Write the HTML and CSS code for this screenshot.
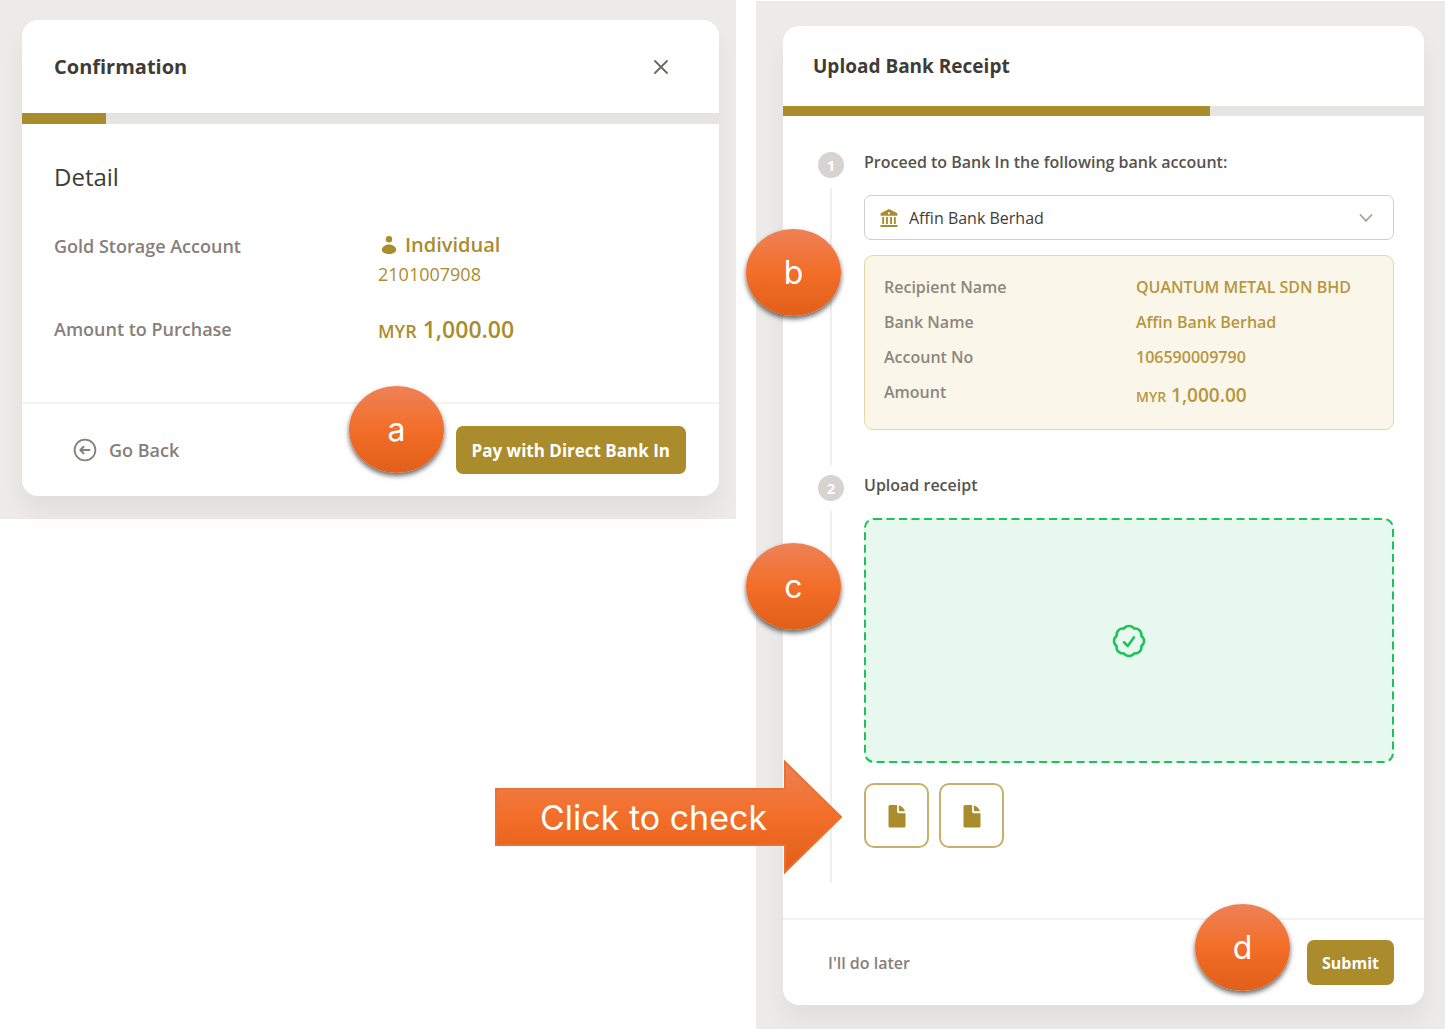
FILE: index.html
```html
<!DOCTYPE html>
<html lang="en">
<head>
<meta charset="utf-8">
<meta name="viewport" content="width=device-width, initial-scale=1">
<title>Direct Bank In</title>
<link rel="stylesheet" href="styles.css">
</head>
<body>
<main class="guide">
  <section class="panel panel-confirm">
    <article class="card">
      <header class="card-header">
        <h1 class="card-title">Confirmation</h1>
        <button class="close" type="button" aria-label="Close">
          <svg width="16" height="16" viewBox="0 0 16 16" fill="none" stroke="currentColor" stroke-width="1.8" stroke-linecap="round"><path d="M2 2l12 12M14 2L2 14"/></svg>
        </button>
      </header>
      <div class="progress"><div class="progress-bar" style="width:12%"></div></div>
      <div class="confirm-body">
        <h2 class="section-title">Detail</h2>
        <dl class="details">
          <dt>Gold Storage Account</dt>
          <dd>
            <span class="holder">
              <svg width="16" height="18" viewBox="0 0 16 18" fill="currentColor"><circle cx="8" cy="3.2" r="3.2"/><path d="M8 8.6c4 0 7.2 2.6 7.2 5.2S12 18 8 18 .8 16.4.8 13.8 4 8.600 8 8.600z"/></svg>
              Individual
            </span>
            <span class="account-no">2101007908</span>
          </dd>
          <dt>Amount to Purchase</dt>
          <dd class="amount"><small>MYR</small> 1,000.00</dd>
        </dl>
      </div>
      <footer class="card-footer">
        <button class="btn-text" type="button">
          <svg width="24" height="24" viewBox="0 0 24 24" fill="none" stroke="currentColor" stroke-width="1.8" stroke-linecap="round" stroke-linejoin="round"><circle cx="12" cy="12" r="10.400"/><path d="M16.500 12h-9M10.500 8.800L7.300 12l3.200 3.200" stroke-width="2"/></svg>
          Go Back
        </button>
        <button class="btn-primary" type="button">Pay with Direct Bank In</button>
      </footer>
    </article>
    <span class="marker marker-a">a</span>
  </section>

  <section class="panel panel-upload">
    <article class="card">
      <header class="card-header">
        <h1 class="card-title">Upload Bank Receipt</h1>
      </header>
      <div class="progress"><div class="progress-bar" style="width:66.6%"></div></div>
      <ol class="steps">
        <li class="step">
          <div class="rail"><span class="step-no">1</span><span class="rail-line"></span></div>
          <div class="step-content">
            <h2 class="step-title"><label for="bank">Proceed to Bank In the following bank account:</label></h2>
            <div class="select">
              <svg class="gold" width="18" height="18" viewBox="0 0 18 18" fill="currentColor"><path fill-rule="evenodd" d="M9 0L.6 4.300v2.500h16.800V4.300zM9 3.200a1.100 1.100 0 1 1 0 2.200 1.100 1.100 0 0 1 0-2.200z"/><path d="M2.200 8h1.900v7H2.200zM6 8h1.900v7H6zM10.100 8H12v7h-1.900zM13.900 8h1.900v7h-1.900zM.5 16h17v2H.5z"/></svg>
              <select id="bank"><option>Affin Bank Berhad</option></select>
              <svg class="chevron" width="14" height="10" viewBox="0 0 14 10" fill="none" stroke="currentColor" stroke-width="1.800" stroke-linecap="round" stroke-linejoin="round"><path d="M1.500 2L7 7.800 12.500 2"/></svg>
            </div>
            <dl class="recipient">
              <dt>Recipient Name</dt><dd>QUANTUM METAL SDN BHD</dd>
              <dt>Bank Name</dt><dd>Affin Bank Berhad</dd>
              <dt>Account No</dt><dd>106590009790</dd>
              <dt>Amount</dt><dd class="recipient-amount"><small>MYR</small> 1,000.00</dd>
            </dl>
          </div>
        </li>
        <li class="step">
          <div class="rail"><span class="step-no">2</span><span class="rail-line"></span></div>
          <div class="step-content">
            <h2 class="step-title">Upload receipt</h2>
            <label class="dropzone">
              <input class="file-input" type="file" aria-label="Upload receipt">
              <svg class="dropzone-outline" width="100%" height="100%"><rect x="1" y="1" rx="9"/></svg>
              <svg width="40" height="40" viewBox="0 0 24 24" fill="none" stroke="currentColor" stroke-width="1.500" stroke-linecap="round" stroke-linejoin="round"><path d="M9 12.750L11.250 15 15 9.750M21 12c0 1.268-.63 2.390-1.593 3.068a3.745 3.745 0 0 1-1.043 3.296 3.745 3.745 0 0 1-3.296 1.043A3.745 3.745 0 0 1 12 21c-1.268 0-2.390-.63-3.068-1.593a3.746 3.746 0 0 1-3.296-1.043 3.745 3.745 0 0 1-1.043-3.296A3.745 3.745 0 0 1 3 12c0-1.268.63-2.390 1.593-3.068a3.745 3.745 0 0 1 1.043-3.296 3.746 3.746 0 0 1 3.296-1.043A3.746 3.746 0 0 1 12 3c1.268 0 2.390.63 3.068 1.593a3.746 3.746 0 0 1 3.296 1.043 3.746 3.746 0 0 1 1.043 3.296A3.745 3.745 0 0 1 21 12z"/></svg>
            </label>
            <div class="files">
              <button class="file" type="button" aria-label="Receipt file 1">
                <svg width="18" height="24" viewBox="0 0 18 24" fill="currentColor"><path d="M2 1h7v6.500A1.800 1.800 0 0 0 10.800 9.300H17.500V22a1.500 1.500 0 0 1-1.500 1.500H2A1.500 1.500 0 0 1 .5 22V2.500A1.500 1.500 0 0 1 2 1z"/><path d="M10.800 1.300c3 1 5.300 3.200 6.200 6h-5a1.200 1.200 0 0 1-1.200-1.200z"/></svg>
              </button>
              <button class="file" type="button" aria-label="Receipt file 2">
                <svg width="18" height="24" viewBox="0 0 18 24" fill="currentColor"><path d="M2 1h7v6.500A1.800 1.800 0 0 0 10.800 9.300H17.500V22a1.500 1.500 0 0 1-1.500 1.500H2A1.500 1.500 0 0 1 .5 22V2.500A1.500 1.500 0 0 1 2 1z"/><path d="M10.800 1.300c3 1 5.300 3.200 6.200 6h-5a1.200 1.200 0 0 1-1.200-1.200z"/></svg>
              </button>
            </div>
          </div>
        </li>
      </ol>
      <footer class="card-footer">
        <button class="btn-text" type="button">I'll do later</button>
        <button class="btn-primary" type="button">Submit</button>
      </footer>
    </article>
    <span class="marker marker-b">b</span>
    <span class="marker marker-c">c</span>
    <span class="marker marker-d">d</span>
    <div class="arrow">
      <svg class="arrow-shape" viewBox="0 0 347 116">
        <defs><linearGradient id="orange" x1="0" y1="0" x2="0" y2="1"><stop offset="0" stop-color="#ee8157"/><stop offset=".5" stop-color="#f36e28"/><stop offset="1" stop-color="#e05f19"/></linearGradient></defs>
        <path d="M1 30h289V3l56 55-56 55V86H1z" fill="url(#orange)" stroke="#e97132" stroke-width="2"/>
      </svg>
      <span class="arrow-text">Click to check</span>
    </div>
  </section>
</main>
</body>
</html>
```
FILE: styles.css
```css
* { box-sizing: border-box; }

:root {
  --gold: #ab8c2d;
  --ink: #3f3c38;
  --muted: #86807a;
  --line: #f3f3f2;
}

body {
  margin: 0;
  background: #fff;
  color: var(--ink);
  font-family: "Open Sans", "Noto Sans", sans-serif;
}

h1, h2, dl, dd, ol { margin: 0; padding: 0; }
button, select { font: inherit; color: inherit; }
button { cursor: pointer; border: 0; background: none; }
svg { flex: none; display: block; }

.guide {
  display: grid;
  grid-template-columns: 736fr 689fr;
  gap: 20px;
  align-items: start;
}

.panel {
  position: relative;
  background: #ecebe9;
}
.panel-confirm { padding: 20px 17px 23px 22px; }
.panel-upload { margin-top: 1px; padding: 25px 21px 24px 27px; }

.card {
  background: #fff;
  border-radius: 16px;
  box-shadow: 0 16px 24px rgba(0, 0, 0, .05);
}

.card-header {
  display: flex;
  align-items: center;
  justify-content: space-between;
}
.panel-confirm .card-header { height: 93px; padding: 0 50px 0 32px; }
.panel-upload .card-header { height: 80px; padding: 0 30px; }

.card-title { font-size: 20px; line-height: 28px; font-weight: 700; }
.panel-upload .card-title { font-size: 19px; }

.close { display: flex; padding: 0; color: #6b6762; }

.progress { height: 11px; background: #e5e4e2; }
.panel-upload .progress { height: 10px; }
.progress-bar { height: 100%; background: var(--gold); }

.confirm-body { padding: 37px 32px 55px; }
.section-title { font-size: 24px; line-height: 32px; font-weight: 500; }

.details {
  display: grid;
  grid-template-columns: 324fr 309fr;
  row-gap: 25px;
  margin-top: 37px;
  font-size: 18px;
  line-height: 32px;
  font-weight: 600;
}
.details dt { color: var(--muted); }
.details dd { display: flex; flex-direction: column; color: var(--gold); }
.details .amount { display: block; font-size: 23px; }
.amount small { font-size: 18px; }
.holder { display: flex; align-items: center; gap: 8px; padding-left: 3px; font-size: 20px; line-height: 30px; }
.account-no { line-height: 28px; font-weight: 400; }

.card-footer {
  display: flex;
  align-items: center;
  justify-content: space-between;
  border-top: 2px solid var(--line);
  font-size: 18px;
  font-weight: 600;
}
.panel-confirm .card-footer { padding: 22px 33px; }
.panel-upload .card-footer { padding: 20px 30px; font-size: 16px; }

.btn-text {
  display: flex;
  align-items: center;
  gap: 12px;
  padding: 0 18px;
  color: var(--muted);
}
.panel-upload .btn-text { padding: 0 15px; }
.btn-primary {
  height: 48px;
  padding: 0 16px;
  border-radius: 7px;
  background: var(--gold);
  color: #fff;
  font-size: 17px;
  font-weight: 700;
}
.panel-upload .btn-primary { height: 45px; padding: 0 15px; font-size: 16px; }

.steps {
  display: flex;
  flex-direction: column;
  gap: 10px;
  padding: 36px 30px 35px 35px;
  list-style: none;
}
.step { display: flex; gap: 20px; }
.rail { display: flex; flex-direction: column; align-items: center; gap: 10px; }
.step-no {
  width: 26px;
  height: 26px;
  border-radius: 50%;
  background: #d6d3d1;
  color: #fff;
  font-size: 15px;
  line-height: 26px;
  font-weight: 700;
  text-align: center;
}
.rail-line { flex: 1; width: 2px; background: #efeeed; }
.step-content { flex: 1; min-width: 0; padding-bottom: 35px; }
.step-title { font-size: 16px; line-height: 20px; font-weight: 600; color: #57534e; }

.select {
  display: flex;
  align-items: center;
  gap: 11px;
  height: 45px;
  margin-top: 23px;
  padding: 0 20px 0 15px;
  border: 1px solid #d0cfcd;
  border-radius: 7px;
}
.select select {
  flex: 1;
  height: 100%;
  padding: 0;
  border: 0;
  background: none;
  appearance: none;
  font-size: 16px;
}
.gold { color: var(--gold); }
.chevron { color: #a8a29e; }

.recipient {
  display: grid;
  grid-template-columns: 252fr 238fr;
  margin-top: 15px;
  padding: 14px 19px 12px;
  border: 1px solid #e4d7a5;
  border-radius: 9px;
  background: #fbf6ea;
  font-size: 16px;
  line-height: 35px;
  font-weight: 600;
  color: #8d867b;
  white-space: nowrap;
}
.recipient dd { color: #b5973f; }
.recipient .recipient-amount { font-size: 19px; line-height: 40px; }
.recipient-amount small { font-size: 14px; }

.dropzone {
  position: relative;
  display: flex;
  align-items: center;
  justify-content: center;
  height: 245px;
  margin-top: 23px;
  border-radius: 10px;
  background: #e7f8ee;
  color: #1cc35a;
  cursor: pointer;
}
.file-input { position: absolute; inset: 0; opacity: 0; }
.dropzone-outline { position: absolute; inset: 0; }
.dropzone-outline rect {
  width: calc(100% - 2px);
  height: calc(100% - 2px);
  fill: none;
  stroke: currentColor;
  stroke-width: 2px;
  stroke-dasharray: 8 4.5;
}

.files { display: flex; gap: 10px; margin-top: 20px; }
.file {
  display: flex;
  align-items: center;
  justify-content: center;
  width: 65px;
  height: 65px;
  padding: 0;
  border: 2px solid #c6b06a;
  border-radius: 10px;
  color: var(--gold);
}

.marker {
  position: absolute;
  display: flex;
  align-items: center;
  justify-content: center;
  width: 95px;
  height: 87px;
  border-radius: 50%;
  background: linear-gradient(#ee8157, #f36e28 50%, #e05f19);
  box-shadow: 0 3px 5px rgba(0, 0, 0, .6);
  color: #fff;
  font-family: Inter, sans-serif;
  font-size: 32px;
}
.marker-a { top: 386px; right: 292px; }
.marker-b { top: 228px; left: -10px; }
.marker-c { top: 542px; left: -10px; }
.marker-d { top: 903px; right: 155px; }

.arrow {
  position: absolute;
  top: 758px;
  left: -261px;
  display: grid;
  align-items: center;
  width: 347px;
  color: #fff;
  font-family: Inter, sans-serif;
  font-size: 34px;
  white-space: nowrap;
}
.arrow-shape, .arrow-text { grid-area: 1 / 1; }
.arrow-text { padding-left: 45px; }
```
